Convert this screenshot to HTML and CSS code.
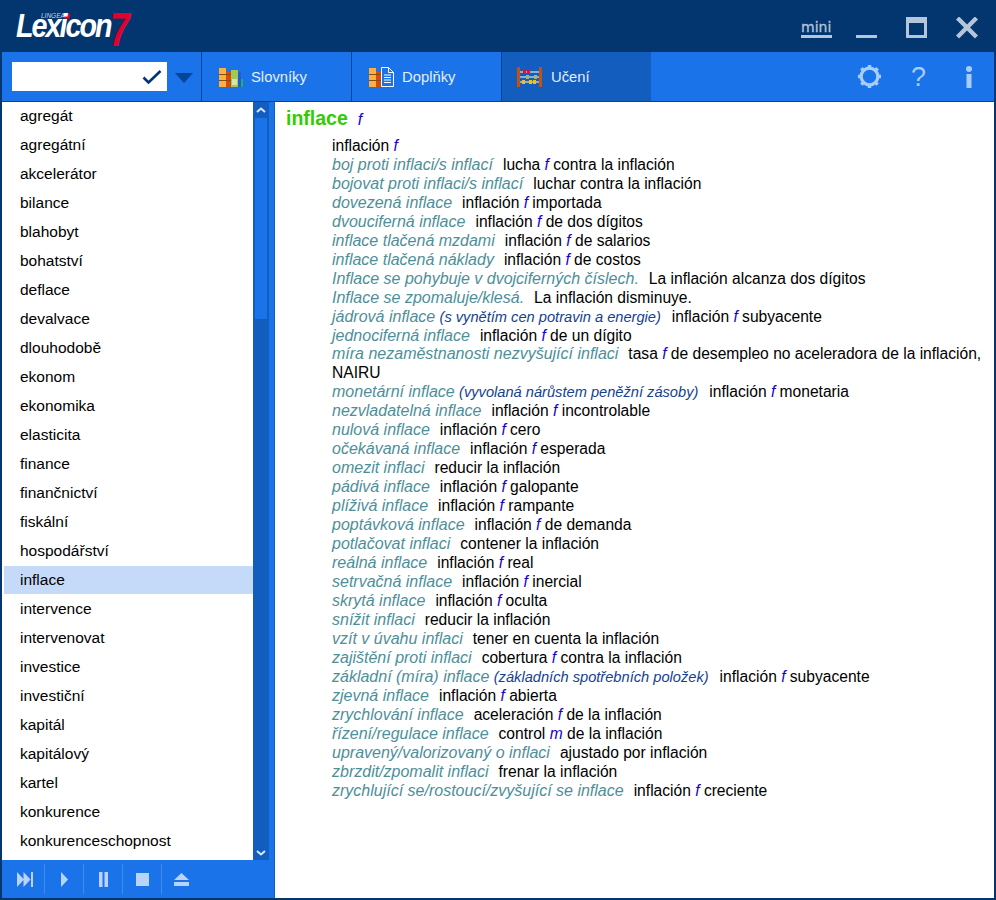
FILE: index.html
```html
<!DOCTYPE html>
<html lang="cs">
<head>
<meta charset="utf-8">
<title>Lexicon 7</title>
<link rel="stylesheet" href="styles.css">
</head>
<body>
<div class="app">
  <header class="titlebar">
    <div class="logo">
      <span class="logo-lingea">LINGEA</span><span class="logo-dot"></span>
      <span class="logo-name">Lexicon</span><span class="logo-seven">7</span>
    </div>
    <div class="winctl">
      <span class="mini">mini</span>
      <svg class="wbtn" width="22" height="22" viewBox="0 0 22 22"><rect x="0" y="18" width="21" height="3" fill="#b5c5da"/></svg>
      <svg class="wbtn" width="22" height="22" viewBox="0 0 22 22"><path fill="#b5c5da" fill-rule="evenodd" d="M0 0h21v21H0zM3 6v12h15V6z"/></svg>
      <svg class="wbtn" width="22" height="22" viewBox="0 0 22 22"><path stroke="#b5c5da" stroke-width="4.400" d="M1.500 1l19 19M20.500 1l-19 19" fill="none"/></svg>
    </div>
  </header>
  <nav class="toolbar">
    <div class="search">
      <div class="search-box">
        <svg width="20" height="14" viewBox="0 0 20 14"><path d="M1.500 7.500l5 5L18.500 1" fill="none" stroke="#03356f" stroke-width="2.600"/></svg>
      </div>
      <svg class="search-drop" width="18" height="10" viewBox="0 0 18 10"><path d="M0 0h18L9 10z" fill="#03459a"/></svg>
    </div>
    <div class="tab">
      <svg width="24" height="20" viewBox="0 0 24 20"><rect x="0" y="1" width="7" height="19" fill="#fbb040"/><rect x="7" y="5" width="5" height="15" fill="#d34a0a"/><rect x="0" y="7" width="12" height="1" fill="#8a4a10"/><rect x="0" y="13" width="12" height="1" fill="#8a4a10"/><rect x="12" y="3" width="7" height="17" fill="#a3c85a"/><rect x="13" y="12" width="5" height="6" fill="#d8e4b0"/><rect x="19" y="5" width="3" height="15" fill="#1f5fd0"/><rect x="22" y="12" width="2" height="8" fill="#1fb070"/></svg>
      <span>Slovníky</span>
    </div>
    <div class="tab">
      <svg width="25" height="20" viewBox="0 0 25 20"><rect x="0" y="1" width="7" height="19" fill="#fbb040"/><rect x="7" y="5" width="5" height="15" fill="#d34a0a"/><rect x="0" y="7" width="12" height="1" fill="#8a4a10"/><rect x="0" y="13" width="12" height="1" fill="#8a4a10"/><path d="M12.500 .5h7l5 5v14h-12z" fill="#1a73e8" stroke="#fff"/><path d="M19.500 .5v5h5" fill="none" stroke="#fff"/><path d="M15 8h7M15 10.500h7M15 13h7M15 15.500h7" stroke="#fff"/></svg>
      <span>Doplňky</span>
    </div>
    <div class="tab tab-active">
      <svg width="25" height="20" viewBox="0 0 25 20"><rect x="0" y="0" width="3" height="20" fill="#c0530f"/><rect x="22" y="0" width="3" height="20" fill="#c0530f"/><path d="M3 5h19M3 10h19M3 15h19" stroke="#fff"/><rect x="6" y="3" width="3" height="4" fill="#e01030"/><rect x="10" y="3" width="3" height="4" fill="#e01030"/><rect x="9" y="8" width="3" height="4" fill="#a9b860"/><rect x="17" y="8" width="3" height="4" fill="#a9b860"/><rect x="5" y="13" width="3" height="4" fill="#f5c010"/><rect x="12" y="13" width="3" height="4" fill="#f5c010"/><rect x="16" y="13" width="3" height="4" fill="#f5c010"/></svg>
      <span>Učení</span>
    </div>
    <div class="tools">
      <svg class="tool-gear" width="25" height="25" viewBox="0 0 26 26"><circle cx="13" cy="13" r="8.700" fill="none" stroke="#a8cdfb" stroke-width="3.400"/><path d="M13 1v24M1 13h24M4.500 4.500l17 17M21.500 4.500l-17 17" stroke="#a8cdfb" stroke-width="3.600" stroke-dasharray="3.600 16.800 3.600" fill="none"/></svg>
      <span class="tool-q">?</span>
      <svg width="8" height="22" viewBox="0 0 8 22"><circle cx="4" cy="3" r="3" fill="#a8cdfb"/><rect x="1.500" y="8" width="5" height="14" fill="#a8cdfb"/></svg>
    </div>
  </nav>
  <main class="main">
    <aside class="side">
      <div class="side-top">
        <ul class="words">
          <li>agregát</li><li>agregátní</li><li>akcelerátor</li><li>bilance</li><li>blahobyt</li><li>bohatství</li><li>deflace</li><li>devalvace</li><li>dlouhodobě</li><li>ekonom</li><li>ekonomika</li><li>elasticita</li><li>finance</li><li>finančnictví</li><li>fiskální</li><li>hospodářství</li><li class="sel">inflace</li><li>intervence</li><li>intervenovat</li><li>investice</li><li>investiční</li><li>kapitál</li><li>kapitálový</li><li>kartel</li><li>konkurence</li><li>konkurenceschopnost</li>
        </ul>
        <div class="scroll">
          <svg class="arrow" width="10" height="6" viewBox="0 0 10 6"><path d="M1 5l4-3.500L9 5" fill="none" stroke="#dbe9fc" stroke-width="2"/></svg>
          <div class="thumb"></div>
          <svg class="arrow arrow-down" width="10" height="6" viewBox="0 0 10 6"><path d="M1 1l4 3.500L9 1" fill="none" stroke="#dbe9fc" stroke-width="2"/></svg>
        </div>
      </div>
      <div class="player">
        <span class="pbtn"><svg width="16" height="15" viewBox="0 0 16 15"><path d="M0 0l7 7.500L0 15zM6.500 0l7 7.500-7 7.500zM14 0h2v15h-2z" fill="#b9d4fa"/></svg></span>
        <span class="pbtn"><svg width="7" height="15" viewBox="0 0 7 15"><path d="M0 0l7 7.500L0 15z" fill="#b9d4fa"/></svg></span>
        <span class="pbtn"><svg width="9" height="15" viewBox="0 0 9 15"><path d="M0 0h3.500v15H0zM5.500 0h3.500v15H5.500z" fill="#b9d4fa"/></svg></span>
        <span class="pbtn"><svg width="13" height="13" viewBox="0 0 13 13"><rect width="13" height="13" fill="#b9d4fa"/></svg></span>
        <span class="pbtn"><svg width="15" height="13" viewBox="0 0 15 13"><path d="M7.500 0L15 7H0zM0 9h15v4H0z" fill="#b9d4fa"/></svg></span>
      </div>
    </aside>
    <article class="entry">
      <h1 class="head"><span class="hw">inflace</span><i class="g">f</i></h1>
      <div class="body">
        <p>inflación <i class="g">f</i></p>
        <p><i class="cz">boj proti inflaci/s inflací</i>lucha <i class="g">f</i> contra la inflación</p>
        <p><i class="cz">bojovat proti inflaci/s inflací</i>luchar contra la inflación</p>
        <p><i class="cz">dovezená inflace</i>inflación <i class="g">f</i> importada</p>
        <p><i class="cz">dvouciferná inflace</i>inflación <i class="g">f</i> de dos dígitos</p>
        <p><i class="cz">inflace tlačená mzdami</i>inflación <i class="g">f</i> de salarios</p>
        <p><i class="cz">inflace tlačená náklady</i>inflación <i class="g">f</i> de costos</p>
        <p><i class="cz">Inflace se pohybuje v dvojciferných číslech.</i>La inflación alcanza dos dígitos</p>
        <p><i class="cz">Inflace se zpomaluje/klesá.</i>La inflación disminuye.</p>
        <p><i class="cz nogap">jádrová inflace</i> <i class="note">(s vynětím cen potravin a energie)</i>inflación <i class="g">f</i> subyacente</p>
        <p><i class="cz">jednociferná inflace</i>inflación <i class="g">f</i> de un dígito</p>
        <p class="wrapped"><i class="cz">míra nezaměstnanosti nezvyšující inflaci</i>tasa <i class="g">f</i> de desempleo no aceleradora de la inflación,<br>NAIRU</p>
        <p><i class="cz nogap">monetární inflace</i> <i class="note">(vyvolaná nárůstem peněžní zásoby)</i>inflación <i class="g">f</i> monetaria</p>
        <p><i class="cz">nezvladatelná inflace</i>inflación <i class="g">f</i> incontrolable</p>
        <p><i class="cz">nulová inflace</i>inflación <i class="g">f</i> cero</p>
        <p><i class="cz">očekávaná inflace</i>inflación <i class="g">f</i> esperada</p>
        <p><i class="cz">omezit inflaci</i>reducir la inflación</p>
        <p><i class="cz">pádivá inflace</i>inflación <i class="g">f</i> galopante</p>
        <p><i class="cz">plíživá inflace</i>inflación <i class="g">f</i> rampante</p>
        <p><i class="cz">poptávková inflace</i>inflación <i class="g">f</i> de demanda</p>
        <p><i class="cz">potlačovat inflaci</i>contener la inflación</p>
        <p><i class="cz">reálná inflace</i>inflación <i class="g">f</i> real</p>
        <p><i class="cz">setrvačná inflace</i>inflación <i class="g">f</i> inercial</p>
        <p><i class="cz">skrytá inflace</i>inflación <i class="g">f</i> oculta</p>
        <p><i class="cz">snížit inflaci</i>reducir la inflación</p>
        <p><i class="cz">vzít v úvahu inflaci</i>tener en cuenta la inflación</p>
        <p><i class="cz">zajištění proti inflaci</i>cobertura <i class="g">f</i> contra la inflación</p>
        <p><i class="cz nogap">základní (míra) inflace</i> <i class="note">(základních spotřebních položek)</i>inflación <i class="g">f</i> subyacente</p>
        <p><i class="cz">zjevná inflace</i>inflación <i class="g">f</i> abierta</p>
        <p><i class="cz">zrychlování inflace</i>aceleración <i class="g">f</i> de la inflación</p>
        <p><i class="cz">řízení/regulace inflace</i>control <i class="g">m</i> de la inflación</p>
        <p><i class="cz">upravený/valorizovaný o inflaci</i>ajustado por inflación</p>
        <p><i class="cz">zbrzdit/zpomalit inflaci</i>frenar la inflación</p>
        <p><i class="cz">zrychlující se/rostoucí/zvyšující se inflace</i>inflación <i class="g">f</i> creciente</p>
      </div>
    </article>
  </main>
</div>
</body>
</html>
```
FILE: styles.css
```css
* { box-sizing: border-box; }
html, body { margin: 0; padding: 0; }
body { width: 996px; height: 900px; overflow: hidden; background: #03356f; font-family: "Liberation Sans", Arial, sans-serif; }
.app { width: 996px; height: 900px; display: flex; flex-direction: column; padding: 0 2px 2px; }

.titlebar { height: 52px; flex: none; display: flex; justify-content: space-between; align-items: flex-start; }
.logo { position: relative; width: 130px; height: 52px; margin-left: 13px; color: #fff; }
.logo-name { position: absolute; left: 1px; top: 17px; font: italic bold 33px/18px "Liberation Sans", sans-serif; letter-spacing: -2.300px; transform: scaleX(.87); transform-origin: left center; }
.logo-lingea { position: absolute; left: 26px; top: 13px; font: italic 6.500px/5px "Liberation Sans", sans-serif; color: #c9d4e2; }
.logo-dot { position: absolute; left: 49px; top: 13px; width: 6px; height: 6px; border-radius: 50%; background: #e3002b; }
.logo-seven { position: absolute; left: 95px; top: 3px; font: italic bold 49px/52px "Liberation Sans", sans-serif; color: #e3002b; transform: scaleX(.72); transform-origin: left center; }
.winctl { display: flex; align-items: flex-start; padding-top: 17px; padding-right: 16px; }
.mini { width: 31px; margin-right: 24px; color: #b5c5da; font: 14px/16px "DejaVu Sans", sans-serif; border-bottom: 3px solid #b5c5da; height: 21px; padding-top: 2px; -webkit-text-stroke: .3px #b5c5da; }
.wbtn { flex: none; margin-left: 28px; }
.mini + .wbtn { margin-left: 0; }

.toolbar { height: 50px; flex: none; display: flex; background: #1a73e8; border-bottom: 1px solid #03459a; color: #e4efff; }
.search { width: 200px; flex: none; display: flex; align-items: center; padding: 0 0 0 10px; border-right: 1px solid #03459a; }
.search-box { width: 155px; height: 29px; flex: none; background: #fff; display: flex; align-items: center; justify-content: flex-end; padding-right: 5px; }
.search-drop { flex: none; margin-left: 8px; margin-top: 2px; }
.tab { width: 150px; flex: none; display: flex; align-items: center; padding-left: 17px; gap: 8px; border-right: 1px solid #03459a; font-size: 14.800px; }
.tab-active { width: 149px; background: #125dbd; border-right: 0; padding-left: 15px; gap: 9px; }
.tools { margin-left: auto; display: flex; align-items: center; padding-right: 21px; }
.tool-gear { margin-right: 29px; }
.tool-q { color: #a8cdfb; font-size: 27px; line-height: 30px; width: 15px; margin-right: 39px; }

.main { flex: 1; min-height: 0; display: flex; background: #fff; }
.side { width: 273px; flex: none; display: flex; flex-direction: column; background: #1a73e8; border-right: 1px solid #125dbd; }
.side-top { flex: 1; min-height: 0; display: flex; padding-right: 5px; }
.words { margin: 0; padding: 0 0 0 2px; list-style: none; width: 251px; background: #fff; overflow: hidden; }
.words li { height: 29px; line-height: 27px; padding-left: 16px; font-size: 15.500px; color: #000; }
.words li.sel { height: 28px; margin-bottom: 1px; background: #c5daf9; }
.scroll { width: 16px; background: #125dbd; display: flex; flex-direction: column; align-items: center; }
.arrow { flex: none; margin-top: 5px; }
.thumb { align-self: stretch; height: 201px; margin: 5px 2px 0; background: #1a73e8; }
.arrow-down { margin-top: auto; margin-bottom: 4px; }
.player { height: 38px; flex: none; display: flex; align-items: center; }
.pbtn { width: 39px; height: 30px; display: flex; align-items: center; justify-content: center; border-right: 1px solid #3f8bee; }
.pbtn:first-child { width: 43px; padding-left: 3px; }
.pbtn:last-child { border-right: 0; }

.entry { flex: 1; min-width: 0; padding: 0 9px 0 11px; overflow: hidden; color: #000; font-size: 15.600px; }
.head { margin: 0; height: 34px; padding-top: 3px; font-size: 19.500px; line-height: 26px; font-weight: bold; }
.hw { color: #33cc00; margin-right: 10px; }
.head .g { font-size: 16px; font-weight: normal; }
.body { padding-left: 46px; }
.body p { margin: 0; line-height: 19px; }
.body p.wrapped { line-height: 18.500px; }
.g { color: #1a00c8; font-style: italic; }
.cz { color: #4d8f99; font-size: 16px; margin-right: 10px; line-height: 16px; }
.cz.nogap { margin-right: 0; }
.note { color: #14418f; font-size: 14.650px; line-height: 14px; margin-right: 11px; }
```
